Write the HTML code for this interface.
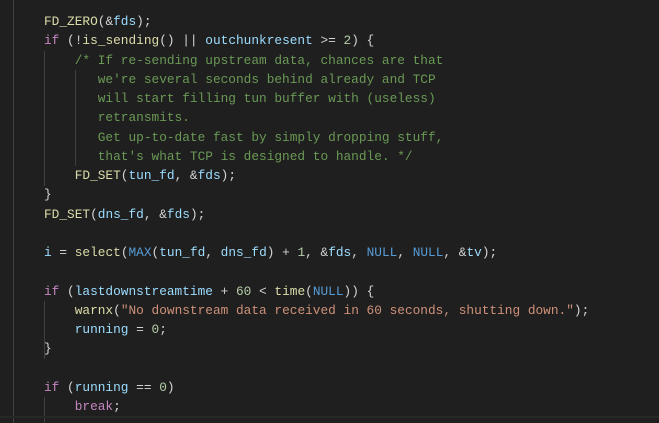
<!DOCTYPE html>
<html><head><style>
html,body{margin:0;padding:0;background:#1f1f1f;width:659px;height:423px;overflow:hidden;position:relative}
pre{position:absolute;left:44px;top:12px;margin:0;font-family:"Liberation Mono",monospace;font-size:12.8px;line-height:19.25px;color:#d4d4d4;white-space:pre}
.f{color:#dcdcaa}.k{color:#c586c0}.v{color:#9cdcfe}.c{color:#6a9955}.n{color:#b5cea8}.m{color:#569cd6}.s{color:#ce9178}
.g{position:absolute;width:1px;background:#404040}
.bot{position:absolute;left:0;top:416px;width:659px;height:2px;background:#282828}
</style></head><body>
<div class="g" style="left:13px;top:0;height:423px"></div>
<div class="g" style="left:44px;top:51px;height:135px"></div>
<div class="g" style="left:75px;top:70px;height:96px"></div>
<div class="g" style="left:44px;top:301px;height:58px"></div>
<div class="g" style="left:44px;top:397px;height:26px"></div>
<div class="bot"></div>
<pre><span class="f">FD_ZERO</span>(&amp;<span class="v">fds</span>);
<span class="k">if</span> (!<span class="f">is_sending</span>() || <span class="v">outchunkresent</span> &gt;= <span class="n">2</span>) {
    <span class="c">/* If re-sending upstream data, chances are that
       we're several seconds behind already and TCP
       will start filling tun buffer with (useless)
       retransmits.
       Get up-to-date fast by simply dropping stuff,
       that's what TCP is designed to handle. */</span>
    <span class="f">FD_SET</span>(<span class="v">tun_fd</span>, &amp;<span class="v">fds</span>);
}
<span class="f">FD_SET</span>(<span class="v">dns_fd</span>, &amp;<span class="v">fds</span>);

<span class="v">i</span> = <span class="f">select</span>(<span class="m">MAX</span>(<span class="v">tun_fd</span>, <span class="v">dns_fd</span>) + <span class="n">1</span>, &amp;<span class="v">fds</span>, <span class="m">NULL</span>, <span class="m">NULL</span>, &amp;<span class="v">tv</span>);

<span class="k">if</span> (<span class="v">lastdownstreamtime</span> + <span class="n">60</span> &lt; <span class="f">time</span>(<span class="m">NULL</span>)) {
    <span class="f">warnx</span>(<span class="s">"No downstream data received in 60 seconds, shutting down."</span>);
    <span class="v">running</span> = <span class="n">0</span>;
}

<span class="k">if</span> (<span class="v">running</span> == <span class="n">0</span>)
    <span class="k">break</span>;</pre>
</body></html>
